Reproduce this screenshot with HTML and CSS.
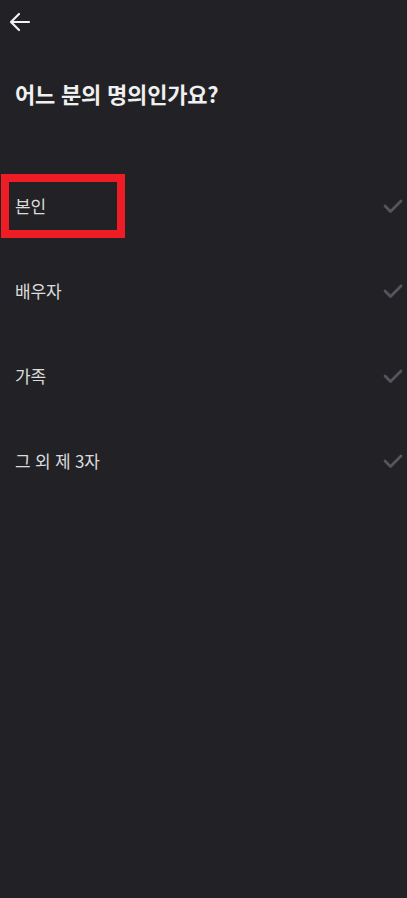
FILE: index.html
```html
<!DOCTYPE html>
<html lang="ko">
<head>
    <meta charset="UTF-8">
    <title>명의 선택</title>
    <link rel="stylesheet" href="styles.css">
</head>
<body>
    <div class="screen">
        <header class="topbar">
            <button class="back" aria-label="뒤로">
                <svg width="22" height="20" viewBox="0 0 22 20" fill="none" stroke="#f2f2f2" stroke-width="2.2" stroke-linecap="round" stroke-linejoin="round">
                    <path d="M20 10H3"/>
                    <path d="M10 2L2 10l8 8"/>
                </svg>
            </button>
        </header>

        <h1 class="title">어느 분의 명의인가요?</h1>

        <ul class="options">
            <li class="option">
                <span class="label">본인</span>
                <svg class="check" width="22" height="16" viewBox="0 0 22 16" fill="none" stroke="#55555b" stroke-width="2.8" stroke-linecap="round" stroke-linejoin="round"><path d="M3 8l5.5 5.5L19 3"/></svg>
                <span class="highlight"></span>
            </li>
            <li class="option">
                <span class="label">배우자</span>
                <svg class="check" width="22" height="16" viewBox="0 0 22 16" fill="none" stroke="#55555b" stroke-width="2.8" stroke-linecap="round" stroke-linejoin="round"><path d="M3 8l5.5 5.5L19 3"/></svg>
            </li>
            <li class="option">
                <span class="label">가족</span>
                <svg class="check" width="22" height="16" viewBox="0 0 22 16" fill="none" stroke="#55555b" stroke-width="2.8" stroke-linecap="round" stroke-linejoin="round"><path d="M3 8l5.5 5.5L19 3"/></svg>
            </li>
            <li class="option">
                <span class="label">그 외 제 3자</span>
                <svg class="check" width="22" height="16" viewBox="0 0 22 16" fill="none" stroke="#55555b" stroke-width="2.8" stroke-linecap="round" stroke-linejoin="round"><path d="M3 8l5.5 5.5L19 3"/></svg>
            </li>
        </ul>
    </div>
</body>
</html>
```

FILE: styles.css
```css
* {
    box-sizing: border-box;
}

body {
    margin: 0;
    background: #222226;
    font-family: 'Noto Sans CJK KR', 'Noto Sans', sans-serif;
    color: #ececec;
}

.screen {
    min-height: 898px;
    background: #222226;
}

.topbar {
    height: 44px;
    display: flex;
    align-items: center;
    padding-left: 9px;
}

.back {
    background: none;
    border: none;
    padding: 0;
    display: flex;
    cursor: pointer;
}

.title {
    margin: 33px 0 0 15px;
    font-size: 22px;
    font-weight: 700;
    line-height: 32px;
    letter-spacing: -0.2px;
    color: #f0f0f0;
}

.options {
    list-style: none;
    margin: 54px 0 0;
    padding: 0;
}

.option {
    position: relative;
    height: 85px;
    display: flex;
    align-items: center;
    justify-content: space-between;
    padding: 0 3px 0 15px;
}

.label {
    font-size: 17px;
    color: #dcdcdc;
    letter-spacing: -0.2px;
}

.highlight {
    position: absolute;
    left: 1px;
    top: 11px;
    width: 124px;
    height: 64px;
    border: 8px solid #ee1c25;
}
```
